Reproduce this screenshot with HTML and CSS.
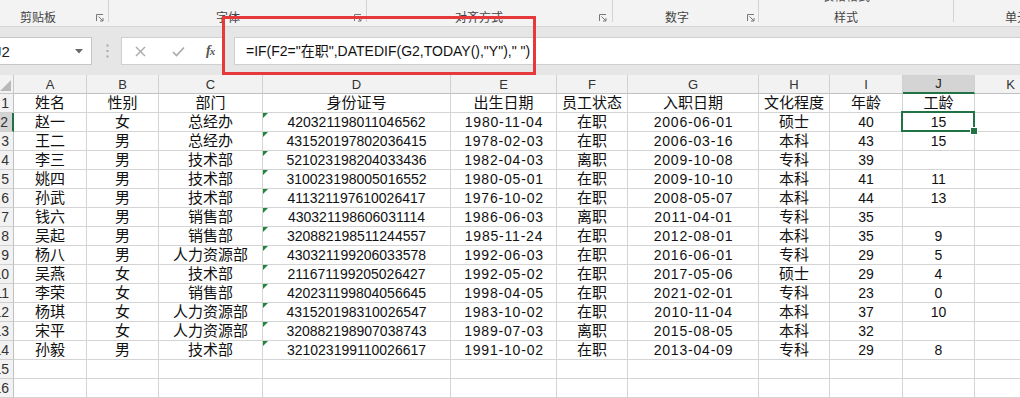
FILE: index.html
```html
<!DOCTYPE html>
<html lang="zh-CN">
<head>
<meta charset="utf-8">
<title>工龄计算</title>
<link rel="stylesheet" href="styles.css">
</head>
<body>
<div class="app">
  <div class="ribbon">
    <div class="grp g1"><span class="lbl">剪贴板</span><svg class="launch" width="8" height="8" viewBox="0 0 8 8"><path d="M0.5 7V0.5H7" fill="none" stroke="#777" stroke-width="1"/><path d="M2.5 2.5L7 7M7 4V7H4" fill="none" stroke="#777" stroke-width="1"/></svg></div>
    <div class="grp g2"><span class="lbl">字体</span><svg class="launch" width="8" height="8" viewBox="0 0 8 8"><path d="M0.5 7V0.5H7" fill="none" stroke="#777" stroke-width="1"/><path d="M2.5 2.5L7 7M7 4V7H4" fill="none" stroke="#777" stroke-width="1"/></svg></div>
    <div class="grp g3"><span class="lbl">对齐方式</span><svg class="launch" width="8" height="8" viewBox="0 0 8 8"><path d="M0.5 7V0.5H7" fill="none" stroke="#777" stroke-width="1"/><path d="M2.5 2.5L7 7M7 4V7H4" fill="none" stroke="#777" stroke-width="1"/></svg></div>
    <div class="grp g4"><span class="lbl">数字</span><svg class="launch" width="8" height="8" viewBox="0 0 8 8"><path d="M0.5 7V0.5H7" fill="none" stroke="#777" stroke-width="1"/><path d="M2.5 2.5L7 7M7 4V7H4" fill="none" stroke="#777" stroke-width="1"/></svg></div>
    <div class="grp g5"><div class="stack"><span class="cut">表格格式</span><span class="lbl">样式</span></div></div>
    <div class="grp g6"><span class="lbl">单元格</span></div>
  </div>

  <div class="fbar">
    <div class="namebox"><span class="nb-text">J2</span><svg class="dd" width="8" height="5" viewBox="0 0 8 5"><path d="M0 0H8L4 4.5Z" fill="#6a6a6a"/></svg></div>
    <svg class="dots" width="3" height="14" viewBox="0 0 3 14"><rect x="0.5" y="0.5" width="2" height="2" fill="#a8a8a8"/><rect x="0.5" y="6" width="2" height="2" fill="#a8a8a8"/><rect x="0.5" y="11.5" width="2" height="2" fill="#a8a8a8"/></svg>
    <div class="fnbox">
      <svg class="ic-x" width="11" height="11" viewBox="0 0 11 11"><path d="M1 1L10 10M10 1L1 10" stroke="#a9a9a9" stroke-width="1.4" fill="none"/></svg>
      <svg class="ic-ok" width="13" height="11" viewBox="0 0 13 11"><path d="M1 6L4.5 9.5L12 1.5" stroke="#a9a9a9" stroke-width="1.6" fill="none"/></svg>
      <span class="fx">f<span class="fx-x">x</span></span>
    </div>
    <div class="finput">=IF(F2="在职",DATEDIF(G2,TODAY(),"Y")," ")</div>
  </div>

  <div class="sheet">
    <div class="corner"><svg width="11" height="11" viewBox="0 0 11 11"><path d="M11 0V11H0Z" fill="#b9b9b9"/></svg></div>
    <div class="ch">A</div><div class="ch">B</div><div class="ch">C</div><div class="ch">D</div><div class="ch">E</div><div class="ch">F</div><div class="ch">G</div><div class="ch">H</div><div class="ch">I</div><div class="ch chs">J</div><div class="ch">K</div>

    <div class="rh"><span>1</span></div>
    <div class="c z">姓名</div><div class="c z">性别</div><div class="c z">部门</div><div class="c z">身份证号</div><div class="c z">出生日期</div><div class="c z">员工状态</div><div class="c z">入职日期</div><div class="c z">文化程度</div><div class="c z">年龄</div><div class="c z">工龄</div><div class="c"></div>

    <div class="rh rhs"><span>2</span></div>
    <div class="c z">赵一</div><div class="c z">女</div><div class="c z">总经办</div><div class="c g">420321198011046562</div><div class="c d">1980-11-04</div><div class="c z">在职</div><div class="c d">2006-06-01</div><div class="c z">硕士</div><div class="c">40</div><div class="c sel">15</div><div class="c"></div>

    <div class="rh"><span>3</span></div>
    <div class="c z">王二</div><div class="c z">男</div><div class="c z">总经办</div><div class="c g">431520197802036415</div><div class="c d">1978-02-03</div><div class="c z">在职</div><div class="c d">2006-03-16</div><div class="c z">本科</div><div class="c">43</div><div class="c">15</div><div class="c"></div>

    <div class="rh"><span>4</span></div>
    <div class="c z">李三</div><div class="c z">男</div><div class="c z">技术部</div><div class="c g">521023198204033436</div><div class="c d">1982-04-03</div><div class="c z">离职</div><div class="c d">2009-10-08</div><div class="c z">专科</div><div class="c">39</div><div class="c"></div><div class="c"></div>

    <div class="rh"><span>5</span></div>
    <div class="c z">姚四</div><div class="c z">男</div><div class="c z">技术部</div><div class="c g">310023198005016552</div><div class="c d">1980-05-01</div><div class="c z">在职</div><div class="c d">2009-10-10</div><div class="c z">本科</div><div class="c">41</div><div class="c">11</div><div class="c"></div>

    <div class="rh"><span>6</span></div>
    <div class="c z">孙武</div><div class="c z">男</div><div class="c z">技术部</div><div class="c g">411321197610026417</div><div class="c d">1976-10-02</div><div class="c z">在职</div><div class="c d">2008-05-07</div><div class="c z">本科</div><div class="c">44</div><div class="c">13</div><div class="c"></div>

    <div class="rh"><span>7</span></div>
    <div class="c z">钱六</div><div class="c z">男</div><div class="c z">销售部</div><div class="c g">430321198606031114</div><div class="c d">1986-06-03</div><div class="c z">离职</div><div class="c d">2011-04-01</div><div class="c z">专科</div><div class="c">35</div><div class="c"></div><div class="c"></div>

    <div class="rh"><span>8</span></div>
    <div class="c z">吴起</div><div class="c z">男</div><div class="c z">销售部</div><div class="c g">320882198511244557</div><div class="c d">1985-11-24</div><div class="c z">在职</div><div class="c d">2012-08-01</div><div class="c z">本科</div><div class="c">35</div><div class="c">9</div><div class="c"></div>

    <div class="rh"><span>9</span></div>
    <div class="c z">杨八</div><div class="c z">男</div><div class="c z">人力资源部</div><div class="c g">430321199206033578</div><div class="c d">1992-06-03</div><div class="c z">在职</div><div class="c d">2016-06-01</div><div class="c z">专科</div><div class="c">29</div><div class="c">5</div><div class="c"></div>

    <div class="rh"><span>10</span></div>
    <div class="c z">吴燕</div><div class="c z">女</div><div class="c z">技术部</div><div class="c g">211671199205026427</div><div class="c d">1992-05-02</div><div class="c z">在职</div><div class="c d">2017-05-06</div><div class="c z">硕士</div><div class="c">29</div><div class="c">4</div><div class="c"></div>

    <div class="rh"><span>11</span></div>
    <div class="c z">李荣</div><div class="c z">女</div><div class="c z">销售部</div><div class="c g">420231199804056645</div><div class="c d">1998-04-05</div><div class="c z">在职</div><div class="c d">2021-02-01</div><div class="c z">专科</div><div class="c">23</div><div class="c">0</div><div class="c"></div>

    <div class="rh"><span>12</span></div>
    <div class="c z">杨琪</div><div class="c z">女</div><div class="c z">人力资源部</div><div class="c g">431520198310026547</div><div class="c d">1983-10-02</div><div class="c z">在职</div><div class="c d">2010-11-04</div><div class="c z">本科</div><div class="c">37</div><div class="c">10</div><div class="c"></div>

    <div class="rh"><span>13</span></div>
    <div class="c z">宋平</div><div class="c z">女</div><div class="c z">人力资源部</div><div class="c g">320882198907038743</div><div class="c d">1989-07-03</div><div class="c z">离职</div><div class="c d">2015-08-05</div><div class="c z">本科</div><div class="c">32</div><div class="c"></div><div class="c"></div>

    <div class="rh"><span>14</span></div>
    <div class="c z">孙毅</div><div class="c z">男</div><div class="c z">技术部</div><div class="c g">321023199110026617</div><div class="c d">1991-10-02</div><div class="c z">在职</div><div class="c d">2013-04-09</div><div class="c z">专科</div><div class="c">29</div><div class="c">8</div><div class="c"></div>

    <div class="rh"><span>15</span></div>
    <div class="c"></div><div class="c"></div><div class="c"></div><div class="c"></div><div class="c"></div><div class="c"></div><div class="c"></div><div class="c"></div><div class="c"></div><div class="c"></div><div class="c"></div>

    <div class="rh"><span>16</span></div>
    <div class="c"></div><div class="c"></div><div class="c"></div><div class="c"></div><div class="c"></div><div class="c"></div><div class="c"></div><div class="c"></div><div class="c"></div><div class="c"></div><div class="c"></div>
  </div>

  <div class="annot"></div>
</div>
</body>
</html>
```

FILE: styles.css
```css
* { box-sizing: border-box; }
html, body { margin: 0; padding: 0; }
body {
  width: 1020px;
  height: 398px;
  overflow: hidden;
  background: #ffffff;
  font-family: "Liberation Sans", "Noto Sans CJK SC", sans-serif;
}
.app {
  position: relative;
  width: 1020px;
  height: 398px;
  overflow: hidden;
}

/* ---------- ribbon ---------- */
.ribbon {
  display: flex;
  height: 27px;
  background: #f3f3f3;
  border-bottom: 1px solid #d6d6d6;
  font-size: 12px;
  color: #444;
}
.grp {
  display: flex;
  align-items: flex-start;
  height: 22px;
  border-right: 1px solid #d2d2d2;
  flex: none;
}
.lbl {
  padding-top: 10px;
  line-height: 16px;
  white-space: nowrap;
}
.launch {
  margin-top: 14px;
  margin-left: auto;
  flex: none;
}
.g1 { width: 109px; padding-left: 20px; padding-right: 4px; }
.g2 { width: 258px; padding-left: 107px; padding-right: 4px; }
.g3 { width: 246px; padding-left: 88px; padding-right: 5px; }
.g4 { width: 146px; padding-left: 52px; padding-right: 3px; }
.g5 { width: 195px; padding-left: 63px; }
.g6 { width: 80px; padding-left: 51px; border-right: none; }
.stack { display: flex; flex-direction: column; align-items: center; }
.stack .cut { line-height: 12px; height: 12px; margin-top: -9px; color: #555; white-space: nowrap; }
.stack .lbl { padding-top: 7px; }

/* ---------- formula bar ---------- */
.fbar {
  display: flex;
  align-items: center;
  height: 48px;
  padding: 10px 0;
  background: #e6e6e6;
}
.namebox {
  display: flex;
  align-items: center;
  width: 93px;
  height: 28px;
  margin-left: -1px;
  background: #fff;
  border: 1px solid #c6c6c6;
  flex: none;
  overflow: hidden;
}
.nb-text {
  font-size: 15px;
  color: #222;
  margin-left: -6px;
  flex: none;
}
.dd { margin-left: auto; margin-right: 8px; }
.dots { margin-left: 14px; flex: none; }
.fnbox {
  display: flex;
  align-items: center;
  width: 104px;
  height: 28px;
  margin-left: 12px;
  background: #fff;
  border: 1px solid #cfcfcf;
  flex: none;
}
.ic-x { margin-left: 13px; }
.ic-ok { margin-left: 26px; }
.fx {
  margin-left: 21px;
  font-family: "Liberation Serif", serif;
  font-style: italic;
  font-weight: bold;
  font-size: 14px;
  color: #555;
  letter-spacing: -1px;
}
.fx-x { font-size: 11px; }
.finput {
  flex: 1;
  height: 28px;
  margin-left: 9px;
  padding-left: 11px;
  background: #fff;
  border: 1px solid #cfcfcf;
  border-right: none;
  font-size: 14px;
  line-height: 26px;
  color: #111;
  white-space: nowrap;
}

/* ---------- sheet ---------- */
.sheet {
  display: grid;
  grid-template-columns: 14px 73px 72px 104px 188px 106px 71px 131px 71px 73px 72px 72px;
  grid-auto-rows: 19px;
  width: 1047px;
  font-size: 14px;
  color: #111;
}
.corner {
  display: flex;
  align-items: flex-end;
  justify-content: flex-end;
  padding: 0 2px 2px 0;
  background: #f2f2f2;
  border-right: 1px solid #c8c8c8;
  border-bottom: 1px solid #c8c8c8;
  overflow: hidden;
}
.corner svg { flex: none; }
.ch {
  display: flex;
  align-items: center;
  justify-content: center;
  background: #f2f2f2;
  border-right: 1px solid #d0d0d0;
  border-bottom: 1px solid #c0c0c0;
  font-size: 13px;
  color: #333;
}
.chs {
  background: #d4d4d4;
  border-bottom: 2px solid #217346;
  color: #222;
}
.rh {
  display: flex;
  align-items: center;
  justify-content: flex-end;
  padding-right: 4px;
  background: #f2f2f2;
  border-right: 1px solid #c0c0c0;
  border-bottom: 1px solid #d0d0d0;
  overflow: hidden;
  font-size: 14px;
  color: #333;
  white-space: nowrap;
}
.rh span { flex: none; }
.rhs {
  background: #d4d4d4;
  border-right: 2px solid #217346;
}
.c {
  position: relative;
  display: flex;
  align-items: center;
  justify-content: center;
  border-right: 1px solid #d4d4d4;
  border-bottom: 1px solid #d4d4d4;
  white-space: nowrap;
  line-height: 18px;
}
.z { font-size: 15px; }
.d { letter-spacing: 0.8px; padding-left: 1px; }
.g::before {
  content: "";
  position: absolute;
  left: 0;
  top: 0;
  border-top: 5px solid #21843a;
  border-right: 5px solid transparent;
}
.sel::after {
  content: "";
  position: absolute;
  left: -2px;
  top: -2px;
  right: -1px;
  bottom: -1px;
  border: 2px solid #217346;
}
.sel::before {
  content: "";
  position: absolute;
  right: -4px;
  bottom: -4px;
  width: 6px;
  height: 6px;
  background: #217346;
  border: 1px solid #fff;
  z-index: 2;
}

/* ---------- annotation ---------- */
.annot {
  position: absolute;
  left: 222px;
  top: 16px;
  width: 314px;
  height: 59px;
  border: 3px solid #e5393b;
  pointer-events: none;
}
```
